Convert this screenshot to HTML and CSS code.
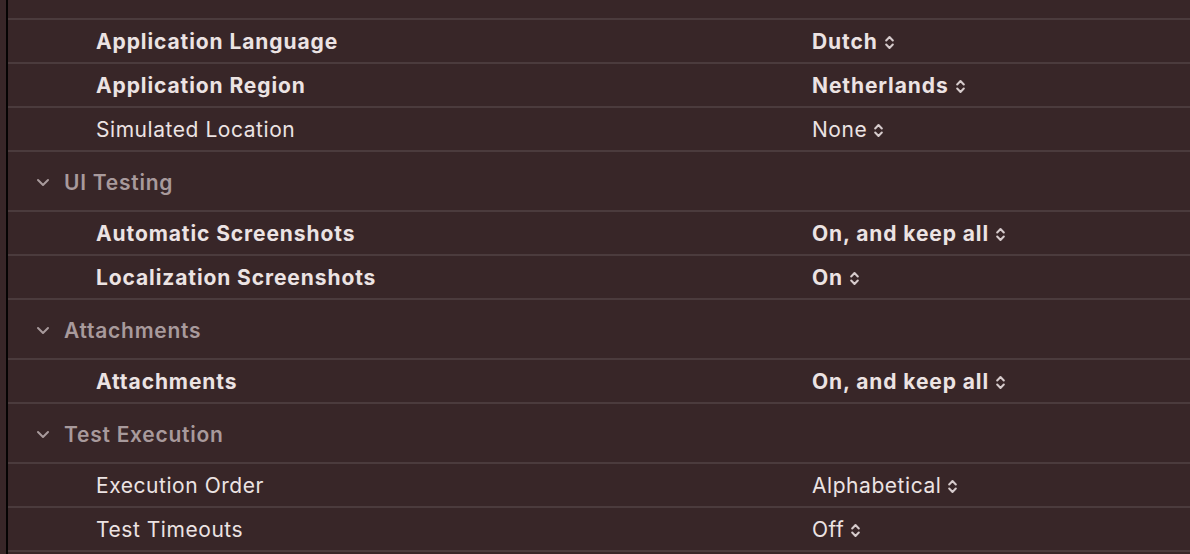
FILE: index.html
```html
<!DOCTYPE html>
<html>
<head>
<meta charset="utf-8">
<link rel="stylesheet" href="styles.css">
</head>
<body>
<div class="panel">
  <div class="top"></div>

  <div class="row"><span class="label bold">Application Language</span><span class="value bold">Dutch<svg class="stepper" viewBox="0 0 9 15"><path d="M1.2 5.5 L4.5 2 L7.8 5.5 M1.2 9.5 L4.5 13 L7.8 9.5"/></svg></span></div>
  <div class="row"><span class="label bold">Application Region</span><span class="value bold">Netherlands<svg class="stepper" viewBox="0 0 9 15"><path d="M1.2 5.5 L4.5 2 L7.8 5.5 M1.2 9.5 L4.5 13 L7.8 9.5"/></svg></span></div>
  <div class="row"><span class="label">Simulated Location</span><span class="value">None<svg class="stepper" viewBox="0 0 9 15"><path d="M1.2 5.5 L4.5 2 L7.8 5.5 M1.2 9.5 L4.5 13 L7.8 9.5"/></svg></span></div>

  <div class="header"><svg class="disclosure" viewBox="0 0 14 9"><path d="M2 2 L7 7 L12 2"/></svg><span>UI Testing</span></div>
  <div class="row"><span class="label bold">Automatic Screenshots</span><span class="value bold">On, and keep all<svg class="stepper" viewBox="0 0 9 15"><path d="M1.2 5.5 L4.5 2 L7.8 5.5 M1.2 9.5 L4.5 13 L7.8 9.5"/></svg></span></div>
  <div class="row"><span class="label bold">Localization Screenshots</span><span class="value bold">On<svg class="stepper" viewBox="0 0 9 15"><path d="M1.2 5.5 L4.5 2 L7.8 5.5 M1.2 9.5 L4.5 13 L7.8 9.5"/></svg></span></div>

  <div class="header"><svg class="disclosure" viewBox="0 0 14 9"><path d="M2 2 L7 7 L12 2"/></svg><span>Attachments</span></div>
  <div class="row"><span class="label bold">Attachments</span><span class="value bold">On, and keep all<svg class="stepper" viewBox="0 0 9 15"><path d="M1.2 5.5 L4.5 2 L7.8 5.5 M1.2 9.5 L4.5 13 L7.8 9.5"/></svg></span></div>

  <div class="header"><svg class="disclosure" viewBox="0 0 14 9"><path d="M2 2 L7 7 L12 2"/></svg><span>Test Execution</span></div>
  <div class="row"><span class="label">Execution Order</span><span class="value">Alphabetical<svg class="stepper" viewBox="0 0 9 15"><path d="M1.2 5.5 L4.5 2 L7.8 5.5 M1.2 9.5 L4.5 13 L7.8 9.5"/></svg></span></div>
  <div class="row"><span class="label">Test Timeouts</span><span class="value">Off<svg class="stepper" viewBox="0 0 9 15"><path d="M1.2 5.5 L4.5 2 L7.8 5.5 M1.2 9.5 L4.5 13 L7.8 9.5"/></svg></span></div>
</div>
</body>
</html>
```

FILE: styles.css
```css
html, body {
  margin: 0;
  padding: 0;
  background: #382628;
  height: 554px;
  overflow: hidden;
}

body {
  font-family: Inter, "Noto Sans", "Liberation Sans", sans-serif;
  color: #ece3e3;
  font-size: 21px;
  letter-spacing: 0.55px;
}

.panel {
  margin-left: 6px;
  border-left: 2px solid #050303;
  height: 554px;
  box-sizing: border-box;
}

.top {
  height: 18px;
  border-bottom: 2px solid #4b3b3d;
}

.row {
  height: 42px;
  border-bottom: 2px solid #4b3b3d;
  display: grid;
  grid-template-columns: 716px 1fr;
  align-items: center;
  padding-left: 88px;
  padding-top: 2px;
  box-sizing: content-box;
}

.row {
  height: 40px;
}

.header {
  height: 56px;
  padding-top: 2px;
  border-bottom: 2px solid #4b3b3d;
  display: flex;
  align-items: center;
  padding-left: 28px;
  color: #a89a9c;
  font-weight: 600;
  letter-spacing: 0.75px;
}

.disclosure {
  width: 14px;
  height: 9px;
  margin-right: 14px;
  fill: none;
  stroke: #a89a9c;
  stroke-width: 2;
  stroke-linecap: round;
  stroke-linejoin: round;
}

.label, .value {
  display: flex;
  align-items: center;
  line-height: 24px;
}

.bold {
  font-weight: 700;
  letter-spacing: 0.9px;
}

.stepper {
  width: 9px;
  height: 15px;
  margin-left: 7px;
  fill: none;
  stroke: #d6cbcc;
  stroke-width: 2;
  stroke-linecap: round;
  stroke-linejoin: round;
}
```
